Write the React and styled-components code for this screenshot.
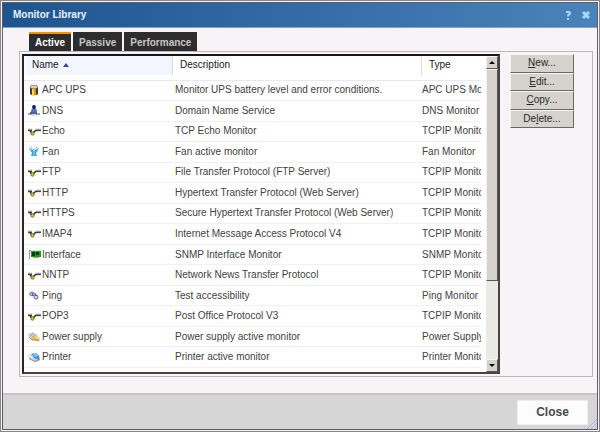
import styled, { createGlobalStyle } from "styled-components"
import { useState } from "react"

const GlobalStyle = createGlobalStyle`
  * {
    box-sizing: border-box;
  }
  body {
    margin: 0;
    background: #8c868c;
    font-family: "Liberation Sans", Arial, sans-serif;
    font-size: 10px;
    color: #424242;
  }
  button {
    font-family: inherit;
    cursor: pointer;
  }
`

const Page = styled.div`
  min-height: 100vh;
  padding: 2px;
  display: flex;
`
const Dialog = styled.section`
  flex: 1;
  min-width: 0;
  display: flex;
  flex-direction: column;
  border: 1px solid #635d63;
  outline: 1px solid #f4f4f4;
  background: #f7f3f7;
`
const TitleBar = styled.header`
  height: 25px;
  padding: 0 7px 0 10px;
  display: flex;
  align-items: center;
  justify-content: space-between;
  background: linear-gradient(to right, #1f558f, #4a82ba);
  border-bottom: 1px solid #7ba6d0;
`
const Title = styled.h1`
  margin: 0;
  font-size: 10px;
  line-height: 16px;
  color: #e7f3ff;
`
const TitleActions = styled.div`
  display: flex;
  gap: 10px;
`
const IconButton = styled.button`
  display: flex;
  padding: 0;
  border: 0;
  background: none;
  color: #a5d7ff;
`
const Content = styled.main`
  flex: 1;
  display: flex;
  flex-direction: column;
  padding: 4px 4px 16px 16px;
`
const TabList = styled.div`
  display: flex;
  gap: 2px;
  padding-left: 10px;
`
const Tab = styled.button`
  height: 19px;
  padding: 0 6px;
  border: 0;
  border-top: 2px solid ${(props) => (props.$active ? "#f79400" : "#2d2d2d")};
  background: #2d2d2d;
  color: ${(props) => (props.$active ? "#ffffff" : "#c6c6c6")};
  font-size: 10px;
  font-weight: bold;
  line-height: 16px;
`
const Panel = styled.div`
  flex: 1;
  display: flex;
  align-items: flex-start;
  gap: 10px;
  padding: 2px 18px 2px 2px;
  border: 1px solid #bdb6bd;
`
const ListBox = styled.div`
  flex: 1;
  align-self: stretch;
  min-width: 0;
  display: flex;
  gap: 5px;
  border: 2px solid #4a4542;
  border-top-color: #181818;
  border-left-color: #292421;
  background: #ffffff;
`
const TableArea = styled.div`
  flex: 1;
  min-width: 0;
  overflow: hidden;
`
const Table = styled.table`
  width: 100%;
  height: 312px;
  table-layout: fixed;
  border-collapse: collapse;
`
const HeadCell = styled.th`
  width: ${(props) => props.$width || "auto"};
  height: 24px;
  padding: 0 0 6px 8px;
  border-bottom: 1px solid #e7e7f7;
  background: ${(props) =>
    props.$sorted
      ? "linear-gradient(#f3f5ff, #f3f5ff) 2px 0 / 100% 19px no-repeat"
      : "linear-gradient(#dedede, #dedede) 0 0 / 1px 19px no-repeat"};
  font-weight: normal;
  text-align: left;
  line-height: 16px;
  color: #181818;
`
const SortArrow = styled.svg`
  margin-left: 4px;
  vertical-align: middle;
`
const Row = styled.tr`
  border-bottom: 1px solid #f1f1f1;
`
const Cell = styled.td`
  padding: 0 0 0 ${(props) => props.$indent || "3px"};
  overflow: hidden;
  white-space: nowrap;
  line-height: 16px;
`
const NameContent = styled.div`
  display: flex;
  align-items: center;
  gap: 1px;
`
const ScrollBar = styled.div`
  width: 12px;
  display: flex;
  flex-direction: column;
  background: #ebe9e6;
`
const ScrollButton = styled.button`
  height: 13px;
  padding: 0;
  display: flex;
  align-items: center;
  justify-content: center;
  background: #d6d3ce;
  border: 1px solid;
  border-color: #f4f2ee #5a5652 #5a5652 #f4f2ee;
`
const ScrollTrack = styled.div`
  flex: 1;
`
const ScrollThumb = styled.div`
  height: 73%;
  background: #d6d3ce;
  border: 1px solid;
  border-color: #f4f2ee #5a5652 #5a5652 #f4f2ee;
`
const Actions = styled.div`
  width: 64px;
  height: 74px;
  display: flex;
  flex-direction: column;
`
const ActionButton = styled.button`
  flex: 1;
  padding: 0;
  background: #d6d3ce;
  border: 1px solid;
  border-color: #f7f5f2 #6b6763 #6b6763 #f7f5f2;
  font-size: 10px;
  line-height: 14px;
  color: #292929;
`
const Footer = styled.footer`
  position: relative;
  height: 36px;
  padding: 0 9px 0 0;
  display: flex;
  align-items: center;
  justify-content: flex-end;
  border-top: 2px solid #c6c3c6;
  background: #d6d6d6;
`
const CloseButton = styled.button`
  width: 71px;
  height: 25px;
  padding: 0;
  border: 1px solid #efefef;
  background: #fcfcfc;
  font-size: 12px;
  font-weight: bold;
  color: #4a4a4a;
`
const ResizeGrip = styled.svg`
  position: absolute;
  right: 0;
  bottom: 0;
`

const BatteryIcon = () => (
  <>
    <path d="M2 3v7q4 3 8 0V3z" fill="#d99a12" />
    <path d="M2 3h2v8l-2-1z" fill="#4b3b24" />
    <path d="M8 4h2v6l-2 1z" fill="#3b352d" />
    <path d="M4 4h2v7H4z" fill="#ffd84a" />
    <ellipse cx="6" cy="3" rx="4" ry="1.8" fill="#d7d2c8" stroke="#67594a" strokeWidth=".6" />
  </>
)
const DnsIcon = () => (
  <>
    <path d="M3 8q0-4 3-4t3 4z" fill="#4a78ad" />
    <circle cx="6" cy="3" r="1.900" fill="#14146b" />
    <path d="M2 9h7" stroke="#1c2c83" strokeWidth="1.500" />
    <path d="M0 10h4m4 0h4" stroke="#39459c" strokeWidth="1.200" />
    <path d="M4 11h4" stroke="#a5b2d6" />
  </>
)
const PipeIcon = () => (
  <>
    <path d="M0 5h4M8 5h5" stroke="#9c9c9c" strokeWidth="2.400" />
    <path d="M0 5.500h4M8 5.500h5" stroke="#424242" strokeWidth="1.200" />
    <path d="M2 6l2 2h1l3-3" fill="none" stroke="#353520" strokeWidth="1.600" />
    <circle cx="4.500" cy="8.500" r="1.700" fill="#d9c91b" stroke="#4a4814" strokeWidth=".7" />
  </>
)
const FanIcon = () => (
  <>
    <path d="M5 5L3 1v3L1 2l1 4 3 1zM7 5l2-4v3l2-2-1 4-3 1z" fill="#63bde7" />
    <path d="M3 6l3-2 3 2-1 2 1 3H3l1-3z" fill="#3a9fd2" />
    <path d="M3 3l3 3 3-3M6 6v5" stroke="#bcecff" strokeWidth=".8" fill="none" />
  </>
)
const InterfaceIcon = () => (
  <>
    <path d="M1.500 2v9M1 2.500h2" stroke="#999" fill="none" />
    <path d="M3 3h10v6H3z" fill="#25932a" />
    <path d="M4 4h3v4H4zM8 4h3v3H8z" fill="#103b16" />
    <path d="M5 9.500h6" stroke="#9fba4a" />
    <path d="M3 3h10" stroke="#66c451" strokeWidth=".6" />
  </>
)
const PingIcon = () => (
  <>
    <ellipse cx="4" cy="5" rx="2.400" ry="1.800" fill="#c5c7ef" stroke="#6b6fb5" />
    <ellipse cx="8" cy="8" rx="2" ry="2" fill="#d8d9f5" stroke="#6064ae" />
    <path d="M4 4l1 3M7 4l1 3" stroke="#35397f" strokeWidth=".8" />
  </>
)
const PowerIcon = () => (
  <>
    <path d="M0 4l5-2 5 3-1 4-5 1-3-2z" fill="#cfcfcc" />
    <path d="M2 4l4 4M4 3l4 4" stroke="#a5a5a0" />
    <path d="M4 8l3-2 4 2 1 2-3 1-3-1z" fill="#e2b83c" />
    <path d="M1 7l3 3h4l3 1" stroke="#b59443" fill="none" />
    <path d="M7 7l3 2" stroke="#fff0a3" />
  </>
)
const PrinterIcon = () => (
  <>
    <path d="M0 5l4-3 4 0 4 4 0 3-4 2-6-3z" fill="#c9ced4" />
    <path d="M4 3l4-1 3 3v4L6 7z" fill="#358fd8" />
    <path d="M5 3l3-1 2 3-3 1z" fill="#83c9ff" />
    <path d="M1 7l6 3 5-2v1l-5 2-6-3z" fill="#83878d" />
    <path d="M1 5l4 2" stroke="#fff" />
  </>
)

const icons = {
  battery: BatteryIcon,
  dns: DnsIcon,
  pipe: PipeIcon,
  fan: FanIcon,
  card: InterfaceIcon,
  ping: PingIcon,
  power: PowerIcon,
  printer: PrinterIcon,
}

const MonitorIcon = ({ name }) => {
  const Drawing = icons[name]
  return (
    <svg width="13" height="13" viewBox="0 0 13 13" aria-hidden="true">
      <Drawing />
    </svg>
  )
}

const monitors = [
  { icon: "battery", name: "APC UPS", description: "Monitor UPS battery level and error conditions.", type: "APC UPS Monitor" },
  { icon: "dns", name: "DNS", description: "Domain Name Service", type: "DNS Monitor" },
  { icon: "pipe", name: "Echo", description: "TCP Echo Monitor", type: "TCPIP Monitor" },
  { icon: "fan", name: "Fan", description: "Fan active monitor", type: "Fan Monitor" },
  { icon: "pipe", name: "FTP", description: "File Transfer Protocol (FTP Server)", type: "TCPIP Monitor" },
  { icon: "pipe", name: "HTTP", description: "Hypertext Transfer Protocol (Web Server)", type: "TCPIP Monitor" },
  { icon: "pipe", name: "HTTPS", description: "Secure Hypertext Transfer Protocol (Web Server)", type: "TCPIP Monitor" },
  { icon: "pipe", name: "IMAP4", description: "Internet Message Access Protocol V4", type: "TCPIP Monitor" },
  { icon: "card", name: "Interface", description: "SNMP Interface Monitor", type: "SNMP Monitor" },
  { icon: "pipe", name: "NNTP", description: "Network News Transfer Protocol", type: "TCPIP Monitor" },
  { icon: "ping", name: "Ping", description: "Test accessibility", type: "Ping Monitor" },
  { icon: "pipe", name: "POP3", description: "Post Office Protocol V3", type: "TCPIP Monitor" },
  { icon: "power", name: "Power supply", description: "Power supply active monitor", type: "Power Supply Monitor" },
  { icon: "printer", name: "Printer", description: "Printer active monitor", type: "Printer Monitor" },
]

const tabs = ["Active", "Passive", "Performance"]

const App = () => {
  const [tab, setTab] = useState("Active")

  return (
    <Page>
      <GlobalStyle />
      <Dialog role="dialog" aria-labelledby="title">
        <TitleBar>
          <Title id="title">Monitor Library</Title>
          <TitleActions>
            <IconButton aria-label="Help">
              <svg width="8" height="10" viewBox="0 0 8 10" fill="none" stroke="currentColor" strokeWidth="2">
                <path d="M2 2h3q1 0 1 1t-1 1.500-1 2M3 9h2" />
              </svg>
            </IconButton>
            <IconButton aria-label="Close window">
              <svg width="8" height="10" viewBox="0 0 8 10" stroke="currentColor" strokeWidth="3">
                <path d="M1 2l6 6M7 2L1 8" />
              </svg>
            </IconButton>
          </TitleActions>
        </TitleBar>
        <Content>
          <TabList role="tablist">
            {tabs.map((name) => (
              <Tab key={name} role="tab" aria-selected={tab === name} $active={tab === name} onClick={() => setTab(name)}>
                {name}
              </Tab>
            ))}
          </TabList>
          <Panel role="tabpanel">
            <ListBox>
              <TableArea>
                <Table>
                  <thead>
                    <tr>
                      <HeadCell $width="148px" $sorted>
                        Name
                        <SortArrow width="6" height="4" viewBox="0 0 6 4" aria-hidden="true">
                          <path d="M0 4l3-4 3 4z" fill="#31498c" />
                        </SortArrow>
                      </HeadCell>
                      <HeadCell $width="249px">Description</HeadCell>
                      <HeadCell>Type</HeadCell>
                    </tr>
                  </thead>
                  <tbody>
                    {monitors.map((monitor) => (
                      <Row key={monitor.name}>
                        <Cell $indent="4px">
                          <NameContent>
                            <MonitorIcon name={monitor.icon} />
                            {monitor.name}
                          </NameContent>
                        </Cell>
                        <Cell>{monitor.description}</Cell>
                        <Cell $indent="1px">{monitor.type}</Cell>
                      </Row>
                    ))}
                  </tbody>
                </Table>
              </TableArea>
              <ScrollBar>
                <ScrollButton aria-label="Scroll up">
                  <svg width="6" height="3" viewBox="0 0 6 3"><path d="M0 3l3-3 3 3z" /></svg>
                </ScrollButton>
                <ScrollTrack>
                  <ScrollThumb />
                </ScrollTrack>
                <ScrollButton aria-label="Scroll down">
                  <svg width="6" height="3" viewBox="0 0 6 3"><path d="M0 0h6L3 3z" /></svg>
                </ScrollButton>
              </ScrollBar>
            </ListBox>
            <Actions>
              <ActionButton><u>N</u>ew...</ActionButton>
              <ActionButton><u>E</u>dit...</ActionButton>
              <ActionButton><u>C</u>opy...</ActionButton>
              <ActionButton>De<u>l</u>ete...</ActionButton>
            </Actions>
          </Panel>
        </Content>
        <Footer>
          <CloseButton>Close</CloseButton>
          <ResizeGrip width="10" height="10" viewBox="0 0 10 10" stroke="#9cbede" aria-hidden="true">
            <path d="M0 10L10 0M4 10l6-6M8 10l2-2" />
          </ResizeGrip>
        </Footer>
      </Dialog>
    </Page>
  )
}

export default App
